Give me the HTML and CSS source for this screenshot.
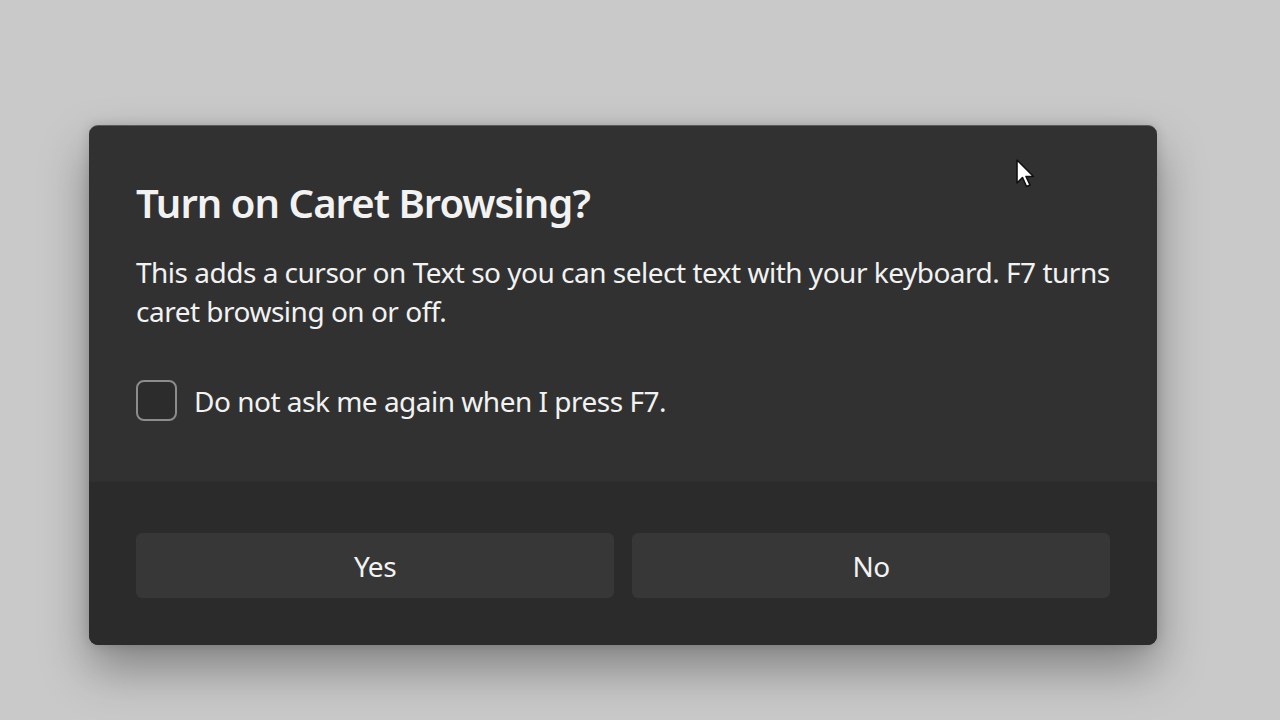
FILE: index.html
```html
<!DOCTYPE html>
<html lang="en">
<head>
    <meta charset="UTF-8">
    <meta name="viewport" content="width=device-width, initial-scale=1.0">
    <title>Turn on Caret Browsing?</title>
    <link rel="stylesheet" href="styles.css">
</head>
<body>

<!-- caret browsing dialog -->
<div class="dialog">
    <div class="dialog-body">
        <h1 class="dialog-title">Turn on Caret Browsing?</h1>
        <p class="dialog-text">This adds a cursor on Text so you can select text with your keyboard. F7 turns caret browsing on or off.</p>
        <label class="check-row">
            <span class="check-box"></span>
            <span class="check-label">Do not ask me again when I press F7.</span>
        </label>
    </div>
    <div class="dialog-footer">
        <button class="dialog-btn">Yes</button>
        <button class="dialog-btn">No</button>
    </div>

    <svg class="pointer" width="22" height="32" viewBox="0 0 22 32">
        <path d="M2 2 L2 25 L7.5 19.5 L11.5 28.5 L15 27 L11 18.5 L18.5 18.5 Z" fill="#fff" stroke="#111" stroke-width="1.6" stroke-linejoin="round"/>
    </svg>
</div>

</body>
</html>
```

FILE: styles.css
```css
/* page */
body {
    margin: 0;
    background: #c9c9c9;
    font-family: "Noto Sans", "Open Sans", sans-serif;
    color: #f2f2f2;
    height: 720px;
    overflow: hidden;
}

/* dialog box */
.dialog {
    position: relative;
    width: 1068px;
    margin: 125px 0 0 89px;
    background: #313131;
    border-radius: 9px;
    border-top: 1px solid #5a5a5a;
    box-shadow: 0 24px 48px rgba(0, 0, 0, 0.35), 0 0 12px rgba(0, 0, 0, 0.15);
    overflow: hidden;
}
.dialog-body {
    padding: 49px 47px 60px;
}
.dialog-title {
    margin: 0;
    font-size: 40px;
    font-weight: 600;
    line-height: 56px;
    letter-spacing: -0.95px;
}
.dialog-text {
    margin: 22px 0 0;
    font-size: 28px;
    line-height: 39px;
    letter-spacing: -0.5px;
    max-width: 990px;
}

/* checkbox row */
.check-row {
    display: flex;
    align-items: center;
    gap: 17px;
    margin-top: 49px;
}
.check-box {
    width: 37px;
    height: 37px;
    border: 2px solid #8c8c8c;
    border-radius: 8px;
    background: #2c2c2c;
}
.check-label {
    font-size: 28px;
    letter-spacing: -0.5px;
}

/* footer with buttons */
.dialog-footer {
    display: grid;
    grid-template-columns: 1fr 1fr;
    gap: 18px;
    padding: 51px 47px 47px;
    background: #2b2b2b;
    border-top: 1px solid #2f2f2f;
}
.dialog-btn {
    height: 65px;
    border: none;
    border-radius: 6px;
    background: #373737;
    color: #f2f2f2;
    font-family: inherit;
    font-size: 28px;
    letter-spacing: -0.5px;
}

/* mouse pointer over the dialog */
.pointer {
    position: absolute;
    left: 926px;
    top: 32px;
}
```
